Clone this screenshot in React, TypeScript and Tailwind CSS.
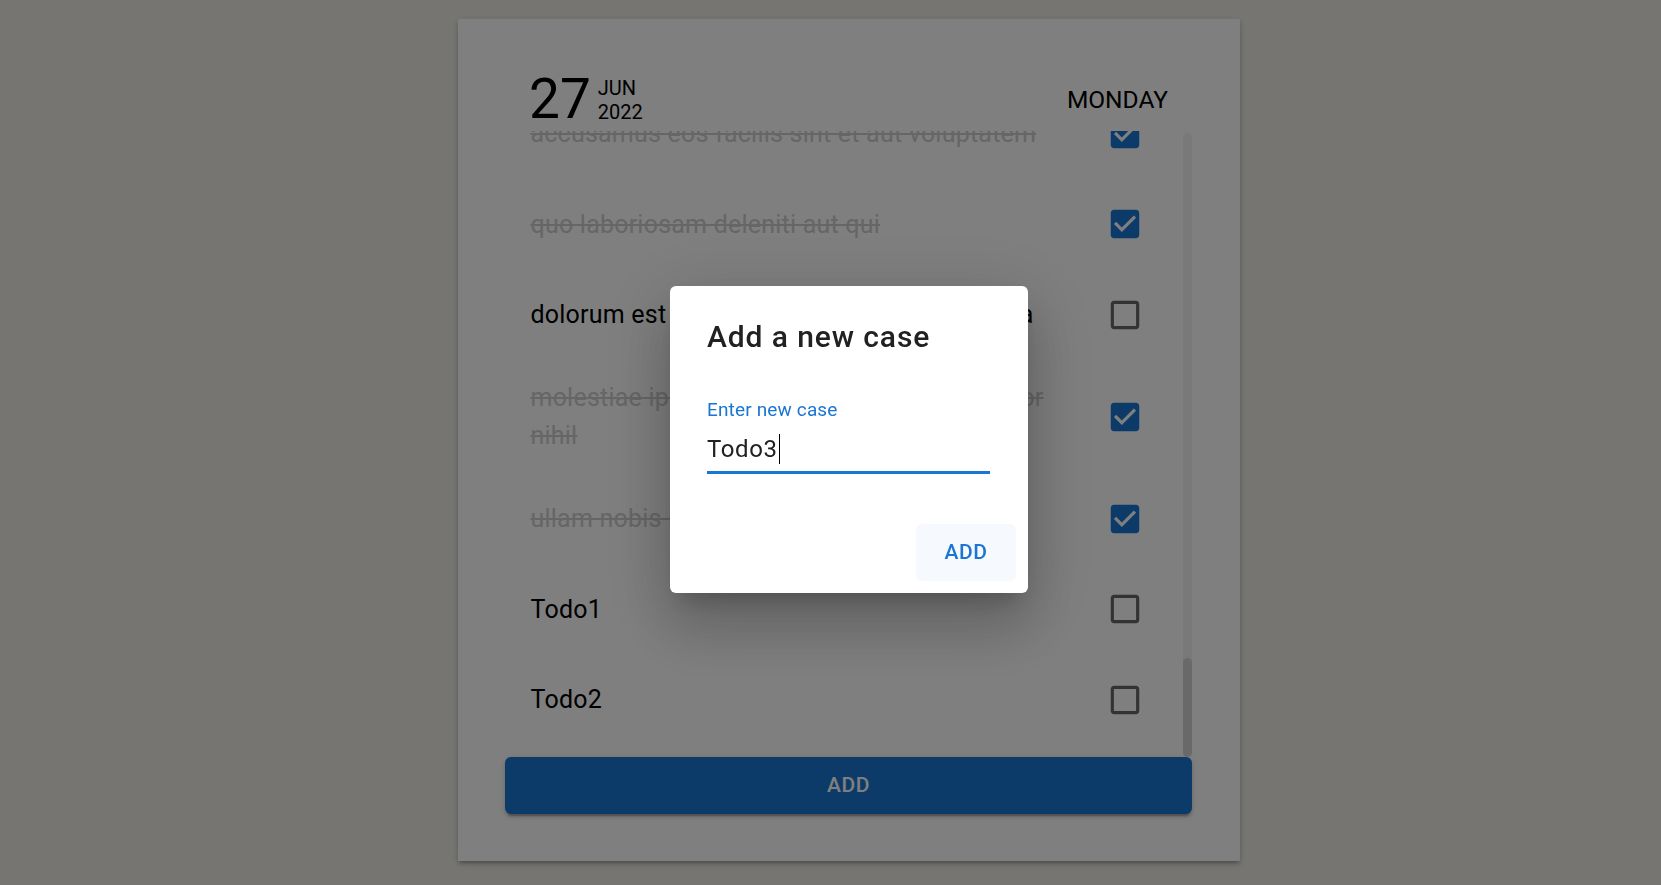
const todos = [
  { title: "delectus aut autem", done: false },
  { title: "quis ut nam facilis et officia qui", done: false },
  { title: "fugiat veniam minus", done: false },
  { title: "et porro tempora", done: true },
  { title: "laboriosam mollitia et enim quasi adipisci quia provident illum", done: false },
  { title: "qui ullam ratione quibusdam voluptatem quia omnis", done: false },
  { title: "illo expedita consequatur quia in", done: false },
  { title: "quo adipisci enim quam ut ab", done: true },
  { title: "molestiae perspiciatis ipsa", done: false },
  { title: "illo est ratione doloremque quia maiores aut", done: true },
  { title: "vero rerum temporibus dolor", done: true },
  { title: "ipsa repellendus fugit nisi", done: true },
  { title: "et doloremque nulla", done: false },
  { title: "repellendus sunt dolores architecto voluptatum", done: true },
  { title: "ab voluptatum amet voluptas", done: true },
  { title: "accusamus eos facilis sint et aut voluptatem", done: true },
  { title: "quo laboriosam deleniti aut qui", done: true },
  { title: "dolorum est consequatur ea mollitia in culpa", done: false },
  { title: "molestiae ipsa aut voluptatibus pariatur dolor nihil", done: true },
  { title: "ullam nobis libero sapiente ad optio sint", done: true },
  { title: "Todo1", done: false },
  { title: "Todo2", done: false },
];

function CheckIcon({ checked }: { checked: boolean }) {
  if (checked) {
    return (
      <svg viewBox="0 0 24 24" className="h-[38px] w-[38px] fill-[#1976d2]">
        <path d="M19 3H5c-1.11 0-2 .9-2 2v14c0 1.1.89 2 2 2h14c1.11 0 2-.9 2-2V5c0-1.1-.89-2-2-2zm-9 14l-5-5 1.41-1.41L10 14.17l7.59-7.59L19 8l-9 9z" />
      </svg>
    );
  }
  return (
    <svg viewBox="0 0 24 24" className="h-[38px] w-[38px] fill-black/60">
      <path d="M19 5v14H5V5h14m0-2H5c-1.1 0-2 .9-2 2v14c0 1.1.9 2 2 2h14c1.1 0 2-.9 2-2V5c0-1.1-.9-2-2-2z" />
    </svg>
  );
}

export default function App() {
  return (
    <div className="min-h-screen bg-[#ecebe3] pt-[19px] pl-[458px] font-['Roboto',sans-serif]">
      <div className="flex h-[842px] w-[782px] flex-col bg-white pt-[48px] pr-[48px] pb-[47px] pl-[47px] shadow-[0_3px_3px_-2px_rgba(0,0,0,0.2),0_3px_4px_0_rgba(0,0,0,0.14),0_1.5px_8px_0_rgba(0,0,0,0.12)]">
        <header className="flex h-[64px] shrink-0 items-center justify-between px-[24px] text-black">
          <div className="flex items-center">
            <span className="text-[55px] leading-[64px]">27</span>
            <div className="mt-[2px] ml-[7px] text-[20px] leading-[24px]">
              <div>JUN</div>
              <div>2022</div>
            </div>
          </div>
          <span className="mt-[2px] text-[24.5px] leading-[28px]">MONDAY</span>
        </header>

        <div className="relative min-h-0 flex-1 overflow-hidden">
          <ul className="flex h-full flex-col justify-end py-[12px]">
            {todos.map((t) => (
              <li
                key={t.title}
                className="flex shrink-0 items-center gap-4 py-[19.25px] pr-[35.5px] pl-[25.5px]"
              >
                <span
                  className={
                    t.done
                      ? "flex-1 text-[25px] leading-[1.5] tracking-[0.22px] text-[#cccccc] line-through"
                      : "flex-1 text-[25px] leading-[1.5] tracking-[0.22px] text-black"
                  }
                >
                  {t.title}
                </span>
                <span className="flex h-[52px] w-[63px] shrink-0 items-center justify-center">
                  <CheckIcon checked={t.done} />
                </span>
              </li>
            ))}
          </ul>
          <div className="absolute top-[2px] right-0 bottom-0 w-[9px] rounded-full bg-[#f3f3f3]">
            <div className="absolute right-0 bottom-0 h-[99px] w-[9px] rounded-full bg-[#d2d2d2]" />
          </div>
        </div>

        <button className="h-[57px] w-full shrink-0 rounded-[6px] bg-[#1976d2] text-[21px] font-medium tracking-[0.6px] text-white shadow-[0_4.5px_1.5px_-3px_rgba(0,0,0,0.2),0_3px_3px_0_rgba(0,0,0,0.14),0_1.5px_7.5px_0_rgba(0,0,0,0.12)]">
          ADD
        </button>
      </div>

      <div className="fixed inset-0 bg-black/50">
        <div
          role="dialog"
          className="absolute top-[286px] left-[670px] flex h-[307px] w-[358px] flex-col rounded-[6px] bg-white shadow-[0_16px_22px_-10px_rgba(0,0,0,0.2),0_36px_57px_5px_rgba(0,0,0,0.14),0_14px_69px_12px_rgba(0,0,0,0.12)]"
        >
          <h2 className="px-[37px] pt-[27px] text-[30px] leading-[48px] font-medium tracking-[0.9px] text-[#212121]">
            Add a new case
          </h2>
          <div className="px-[37px]">
            <label className="mt-[37px] block text-[19px] leading-[23px] tracking-[0.15px] text-[#1976d2]">
              Enter new case
            </label>
            <div className="mt-[11px] flex w-[283px] items-center border-b-[3px] border-[#1976d2] pb-[5px] text-[24px] leading-[34px] tracking-[0.6px] text-[#212121]">
              <span>Todo3</span>
              <span className="ml-px inline-block h-[30px] w-px bg-black" />
            </div>
          </div>
          <button className="mt-auto mr-[12px] mb-[12px] h-[57px] w-[100px] self-end rounded-[6px] bg-[#f6f9fd] text-[21px] font-medium tracking-[0.6px] text-[#1976d2]">
            ADD
          </button>
        </div>
      </div>
    </div>
  );
}
